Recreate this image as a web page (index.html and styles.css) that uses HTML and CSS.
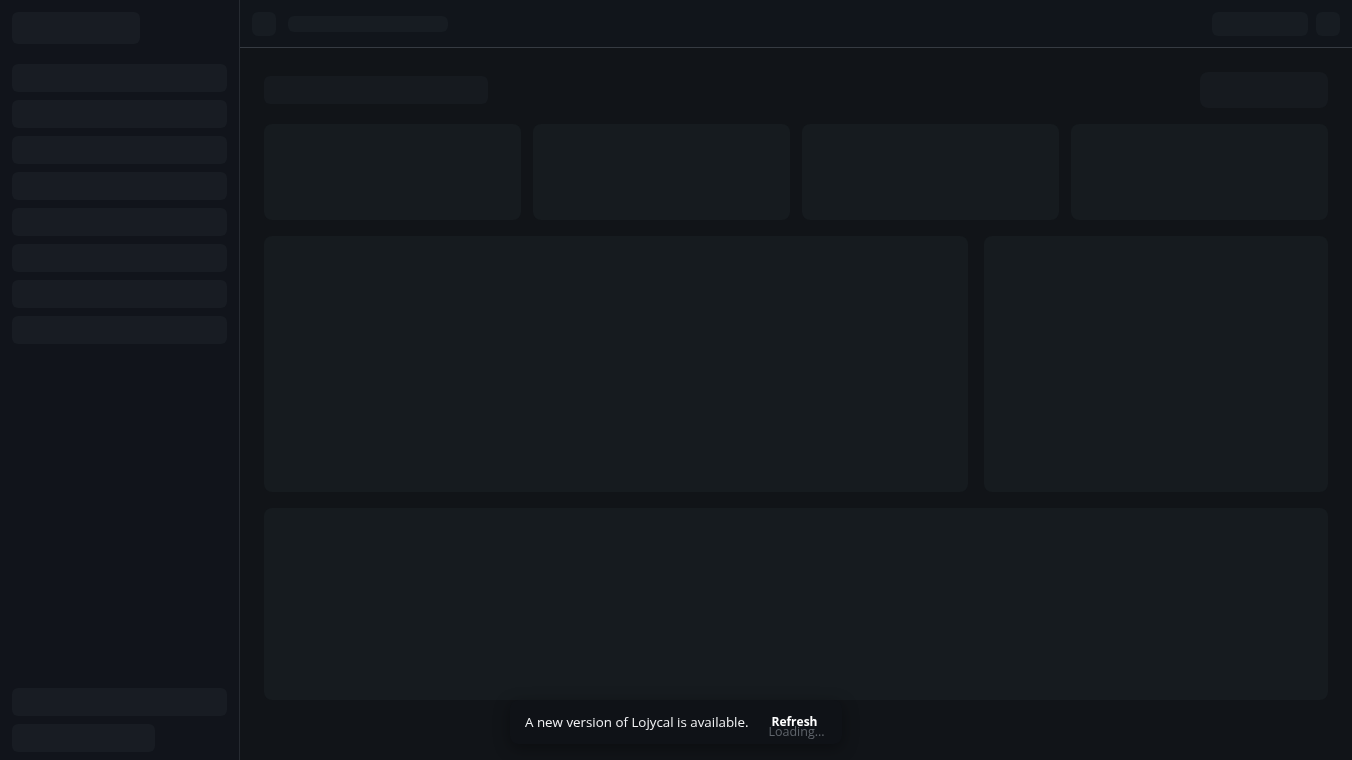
FILE: index.html
```html
<!DOCTYPE html>
<html lang="en">
<head>
    <meta charset="UTF-8">
    <meta name="viewport" content="width=device-width, initial-scale=1.0">
    <title>Lojycal</title>
    <link rel="stylesheet" href="styles.css">
</head>
<body>
    <div class="app">
        <aside class="sidebar">
            <div class="sk sk-logo"></div>
            <nav class="nav">
                <div class="sk sk-nav"></div>
                <div class="sk sk-nav"></div>
                <div class="sk sk-nav"></div>
                <div class="sk sk-nav"></div>
                <div class="sk sk-nav"></div>
                <div class="sk sk-nav"></div>
                <div class="sk sk-nav"></div>
                <div class="sk sk-nav"></div>
            </nav>
            <div class="sidebar-foot">
                <div class="sk sk-nav"></div>
                <div class="sk sk-nav short"></div>
            </div>
        </aside>

        <div class="main">
            <header class="topbar">
                <div class="sk sk-icon"></div>
                <div class="sk sk-crumb"></div>
                <div class="spacer"></div>
                <div class="sk sk-search"></div>
                <div class="sk sk-icon"></div>
            </header>

            <div class="content">
                <div class="page-head">
                    <div class="sk sk-title"></div>
                    <div class="sk sk-btn"></div>
                </div>
                <div class="stats">
                    <div class="card stat"></div>
                    <div class="card stat"></div>
                    <div class="card stat"></div>
                    <div class="card stat"></div>
                </div>
                <div class="split">
                    <div class="card chart"></div>
                    <div class="card chart"></div>
                </div>
                <div class="card table"></div>
            </div>
        </div>
    </div>

    <div class="toast">
        <span class="toast-msg">A new version of Lojycal is available.</span>
        <button class="toast-btn">
            Refresh
            <span class="toast-loading">Loading...</span>
        </button>
    </div>
</body>
</html>
```

FILE: styles.css
```css
* {
    box-sizing: border-box;
}
body {
    margin: 0;
    font-family: "Open Sans", "Noto Sans", sans-serif;
    background: #111418;
    color: #fff;
    overflow: hidden;
}
.app {
    display: flex;
    height: 760px;
}
.sk {
    background: #181c23;
    border-radius: 6px;
}
.sidebar {
    width: 240px;
    flex: none;
    background: #11141b;
    border-right: 1px solid #262a31;
    padding: 12px 12px 8px;
    display: flex;
    flex-direction: column;
}
.sk-logo {
    width: 128px;
    height: 32px;
}
.nav {
    margin-top: 20px;
    display: flex;
    flex-direction: column;
    gap: 8px;
}
.sk-nav {
    height: 28px;
}
.sk-nav.short {
    width: 143px;
}
.sidebar-foot {
    margin-top: auto;
    display: flex;
    flex-direction: column;
    gap: 8px;
}
.main {
    flex: 1;
    display: flex;
    flex-direction: column;
}
.topbar {
    height: 48px;
    flex: none;
    background: #11151b;
    border-bottom: 1px solid #363b42;
    display: flex;
    align-items: center;
    padding: 0 12px;
    gap: 12px;
}
.topbar .sk {
    background: #171c22;
}
.sk-icon {
    width: 24px;
    height: 24px;
}
.sk-crumb {
    width: 160px;
    height: 16px;
}
.spacer {
    flex: 1;
}
.sk-search {
    width: 96px;
    height: 24px;
    margin-right: -4px;
}
.content {
    flex: 1;
    padding: 24px;
    display: flex;
    flex-direction: column;
    gap: 16px;
}
.page-head {
    display: flex;
    justify-content: space-between;
    align-items: center;
}
.page-head .sk {
    background: #161a1f;
}
.sk-title {
    width: 224px;
    height: 28px;
}
.sk-btn {
    width: 128px;
    height: 36px;
    border-radius: 8px;
}
.card {
    background: #161b1f;
    border-radius: 8px;
}
.stats {
    display: grid;
    grid-template-columns: repeat(4, 1fr);
    gap: 12px;
}
.stat {
    height: 96px;
}
.split {
    display: grid;
    grid-template-columns: 704px 1fr;
    gap: 16px;
}
.chart {
    height: 256px;
}
.table {
    height: 192px;
}
.toast {
    position: fixed;
    left: 510px;
    top: 700px;
    width: 332px;
    height: 44px;
    background: #0f1217;
    border-radius: 8px;
    box-shadow: 0 4px 16px rgba(0, 0, 0, 0.35);
    display: flex;
    align-items: center;
    padding: 0 15px;
}
.toast-msg {
    font-size: 13.35px;
    color: #f2f3f5;
}
.toast-btn {
    position: relative;
    margin-left: 23px;
    background: none;
    border: none;
    padding: 0;
    color: #fff;
    font-family: inherit;
    font-size: 12px;
    font-weight: 700;
    line-height: 16px;
    cursor: pointer;
}
.toast-loading {
    position: absolute;
    left: -3px;
    top: 10px;
    font-size: 12.5px;
    font-weight: 400;
    color: #5f646b;
    white-space: nowrap;
}
```
